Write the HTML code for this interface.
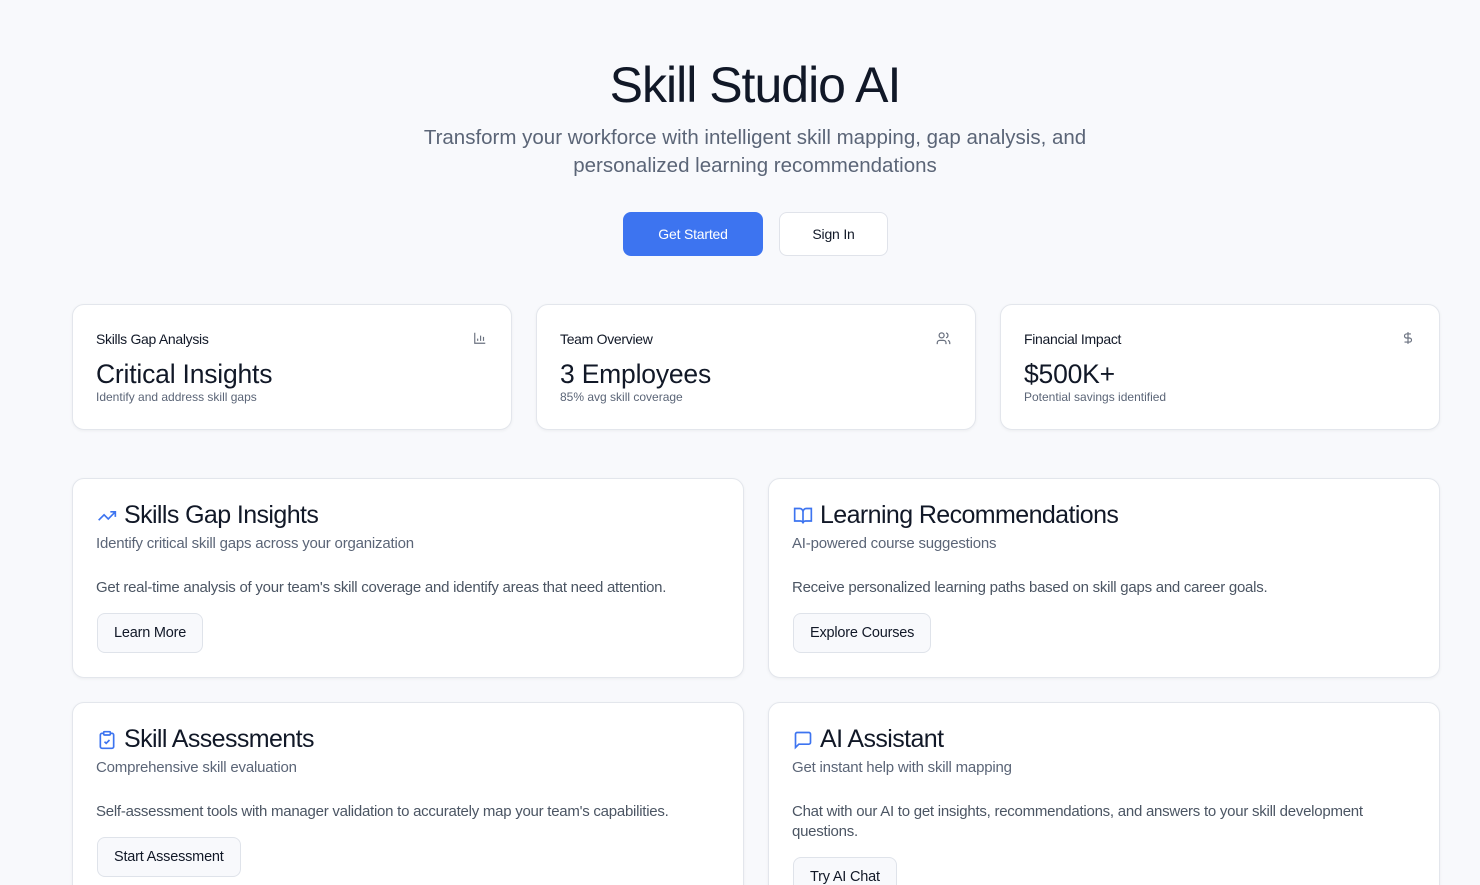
<!DOCTYPE html>
<html><head><meta charset="utf-8"><style>
*{box-sizing:border-box;margin:0;padding:0}
html,body{width:1480px;height:885px;overflow:hidden}
body{background:#f8f9fc;font-family:"Liberation Sans",sans-serif;color:#111827;position:relative}
.a{position:absolute}
h1{position:absolute;top:56px;left:15px;width:1480px;text-align:center;font-size:50px;font-weight:500;letter-spacing:-1px;color:#111827}
.sub{top:124px;left:15px;width:1480px;text-align:center;font-size:20.5px;line-height:28px;color:#5b6577;letter-spacing:0}
.btn{position:absolute;border-radius:8px;font-size:14px;display:flex;align-items:center;justify-content:center;letter-spacing:-0.2px}
.card{position:absolute;background:#fff;border:1px solid #e3e6ec;border-radius:12px;box-shadow:0 1px 3px rgba(0,0,0,.05)}
.st .t{position:absolute;left:23px;top:26px;font-size:14px;letter-spacing:-0.3px}
.st .v{position:absolute;left:23px;top:54px;font-size:26.5px;letter-spacing:-0.2px}
.st .d{position:absolute;left:23px;top:85px;font-size:12px;color:#5b6577;letter-spacing:0}
.st svg{position:absolute;right:24px;top:26px}
.fc h2{position:absolute;left:51px;top:22px;font-size:25px;font-weight:500;letter-spacing:-0.6px}
.fc svg{position:absolute;left:24px;top:27px}
.fc .s{position:absolute;left:23px;top:56px;font-size:15px;color:#5b6577;letter-spacing:-0.2px}
.fc .p{position:absolute;left:23px;top:99px;right:60px;font-size:15px;line-height:20px;color:#4b5563;letter-spacing:-0.25px}
.fc .b{position:absolute;left:24px;height:40px;padding:0 16px;border:1px solid #dfe3ea;background:#f8f9fc;border-radius:8px;font-size:14.5px;display:flex;align-items:center;letter-spacing:-0.2px}
</style></head><body>
<h1>Skill Studio AI</h1>
<div class="a sub">Transform your workforce with intelligent skill mapping, gap analysis, and<br>personalized learning recommendations</div>
<div class="btn" style="left:623px;top:212px;width:140px;height:44px;background:#3d74f0;color:#fff">Get Started</div>
<div class="btn" style="left:779px;top:212px;width:109px;height:44px;background:#fff;border:1px solid #e0e3ea">Sign In</div>

<div class="card st" style="left:72px;top:304px;width:440px;height:126px"><div class="t">Skills Gap Analysis</div><div class="v">Critical Insights</div><div class="d">Identify and address skill gaps</div>
<svg width="14" height="14" viewBox="0 0 24 24" fill="none" stroke="#6b7280" stroke-width="2"><path d="M3 3v18h18M8 17v-4M13 17V8M18 17v-7"/></svg></div>
<div class="card st" style="left:536px;top:304px;width:440px;height:126px"><div class="t">Team Overview</div><div class="v">3 Employees</div><div class="d">85% avg skill coverage</div>
<svg width="15" height="15" viewBox="0 0 24 24" fill="none" stroke="#6b7280" stroke-width="2"><circle cx="9" cy="7" r="4"/><path d="M2 21v-2a4 4 0 0 1 4-4h6a4 4 0 0 1 4 4v2M16 3.1a4 4 0 0 1 0 7.8M22 21v-2a4 4 0 0 0-3-3.9"/></svg></div>
<div class="card st" style="left:1000px;top:304px;width:440px;height:126px"><div class="t">Financial Impact</div><div class="v">$500K+</div><div class="d">Potential savings identified</div>
<svg width="14" height="14" viewBox="0 0 24 24" fill="none" stroke="#6b7280" stroke-width="2"><path d="M12 2v20M17 5H9.5a3.5 3.5 0 0 0 0 7h5a3.5 3.5 0 0 1 0 7H6"/></svg></div>

<div class="card fc" style="left:72px;top:478px;width:672px;height:200px">
<svg width="20" height="20" viewBox="0 0 24 24" fill="none" stroke="#3d74f0" stroke-width="2"><path d="M22 7l-8.5 8.5-5-5L2 17M16 7h6v6"/></svg>
<h2>Skills Gap Insights</h2><div class="s">Identify critical skill gaps across your organization</div>
<div class="p">Get real-time analysis of your team's skill coverage and identify areas that need attention.</div>
<div class="b" style="top:134px">Learn More</div></div>
<div class="card fc" style="left:768px;top:478px;width:672px;height:200px">
<svg width="20" height="20" viewBox="0 0 24 24" fill="none" stroke="#3d74f0" stroke-width="2"><path d="M2 3h6a4 4 0 0 1 4 4v14a3 3 0 0 0-3-3H2zM22 3h-6a4 4 0 0 0-4 4v14a3 3 0 0 1 3-3h7z"/></svg>
<h2>Learning Recommendations</h2><div class="s">AI-powered course suggestions</div>
<div class="p">Receive personalized learning paths based on skill gaps and career goals.</div>
<div class="b" style="top:134px">Explore Courses</div></div>
<div class="card fc" style="left:72px;top:702px;width:672px;height:200px">
<svg width="20" height="20" viewBox="0 0 24 24" fill="none" stroke="#3d74f0" stroke-width="2"><rect x="8" y="2" width="8" height="4" rx="1"/><path d="M16 4h2a2 2 0 0 1 2 2v14a2 2 0 0 1-2 2H6a2 2 0 0 1-2-2V6a2 2 0 0 1 2-2h2M9 14l2 2 4-4"/></svg>
<h2>Skill Assessments</h2><div class="s">Comprehensive skill evaluation</div>
<div class="p">Self-assessment tools with manager validation to accurately map your team's capabilities.</div>
<div class="b" style="top:134px">Start Assessment</div></div>
<div class="card fc" style="left:768px;top:702px;width:672px;height:200px">
<svg width="20" height="20" viewBox="0 0 24 24" fill="none" stroke="#3d74f0" stroke-width="2"><path d="M21 15a2 2 0 0 1-2 2H7l-4 4V5a2 2 0 0 1 2-2h14a2 2 0 0 1 2 2z"/></svg>
<h2>AI Assistant</h2><div class="s">Get instant help with skill mapping</div>
<div class="p">Chat with our AI to get insights, recommendations, and answers to your skill development questions.</div>
<div class="b" style="top:154px">Try AI Chat</div></div>
</body></html>
